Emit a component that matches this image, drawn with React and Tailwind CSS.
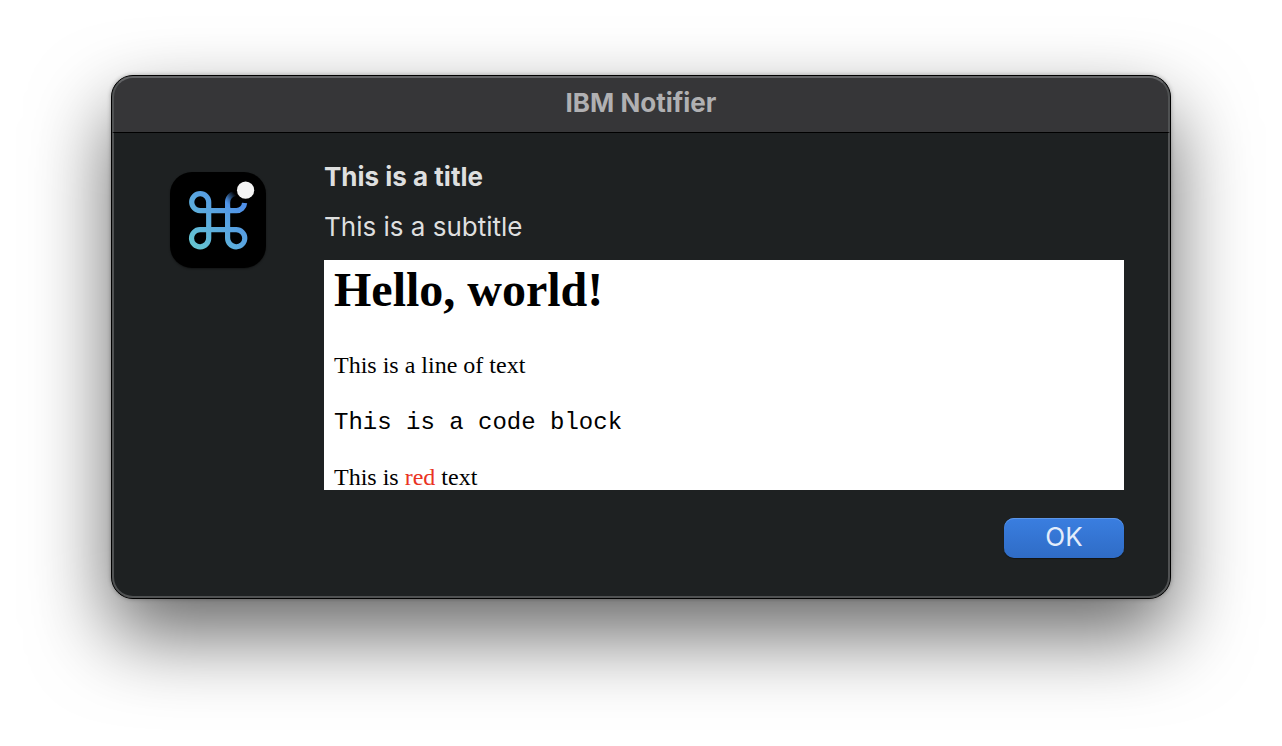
function AppIcon() {
  return (
    <svg
      viewBox="0 0 96 96"
      className="size-24 shrink-0 rounded-[22px] bg-black shadow-[0_1px_2px_rgba(0,0,0,0.4)]"
      role="img"
      aria-label="IBM Notifier"
    >
      <defs>
        <linearGradient id="stroke" gradientUnits="userSpaceOnUse" x1="20" y1="76" x2="76" y2="20">
          <stop offset="0" stopColor="#66c8d0" />
          <stop offset="0.5" stopColor="#5aa6e0" />
          <stop offset="1" stopColor="#4a86ea" />
        </linearGradient>
        <linearGradient id="fade" gradientUnits="userSpaceOnUse" x1="57" y1="31" x2="66" y2="23">
          <stop offset="0" stopColor="#4f94e8" />
          <stop offset="0.25" stopColor="#3f78bd" />
          <stop offset="1" stopColor="#000000" />
        </linearGradient>
      </defs>
      <path
        d="M57.6 36V30.2A8.8 8.8 0 0 1 66 21.4"
        fill="none"
        stroke="url(#fade)"
        strokeWidth="5.2"
      />
      <path
        d="M74.6 31A8.2 8.2 0 0 1 66.2 38.6H30A8.5 8.5 0 1 1 38.7 30V66A8.6 8.6 0 1 1 30 57.6H66A8.6 8.6 0 1 1 57.6 66V35"
        fill="none"
        stroke="url(#stroke)"
        strokeWidth="5.2"
      />
      <circle cx="75.6" cy="18.2" r="8.6" fill="#f4f4f4" />
    </svg>
  );
}

export default function App() {
  return (
    <main className="min-h-screen overflow-hidden bg-white px-[111px] pt-[75px] pb-36 font-[Inter,sans-serif]">
      <section
        role="dialog"
        aria-labelledby="window-title"
        className="rounded-[22px] border border-black bg-[#1e2122] shadow-[0_36px_80px_rgba(0,0,0,0.6),0_0_4px_rgba(0,0,0,0.3)]"
      >
        <header className="flex h-[57px] items-center justify-center rounded-t-[21px] border-x-2 border-t-2 border-b border-x-[#505253] border-t-[#646567] border-b-black bg-[#363638] pb-1">
          <h1 id="window-title" className="text-[26px] leading-8 font-bold text-[#b0b0b2]">
            IBM Notifier
          </h1>
        </header>
        <div className="flex gap-[58px] rounded-b-[21px] border-x-2 border-b-2 border-[#505253] pt-7 pr-11 pb-[38px] pl-14">
          <div className="pt-[11px]">
            <AppIcon />
          </div>
          <div className="flex min-w-0 flex-1 flex-col">
            <h2 className="text-[26px] leading-8 font-bold text-[#dedfdf]">This is a title</h2>
            <p className="mt-[18px] text-[26px] leading-8 text-[#dedfdf]">This is a subtitle</p>
            <article className="mt-[17px] h-[230px] overflow-hidden bg-white px-[10px] pt-[2px] font-['Liberation_Serif',serif] text-2xl leading-7 text-black">
              <h3 className="text-5xl leading-14 font-bold">Hello, world!</h3>
              <p className="mt-[33px]">This is a line of text</p>
              <pre className="mt-[30px] font-['Liberation_Mono',monospace] leading-7">This is a code block</pre>
              <p className="mt-[26px]">
                This is <span className="text-[#ea3323]">red</span> text
              </p>
            </article>
            <button
              type="button"
              className="mt-7 h-10 w-30 self-end rounded-[10px] bg-linear-to-b from-[#3a7ee0] to-[#2f6cc6] pb-0.5 text-[26px] leading-8 text-[#e3edfb] shadow-[inset_0_1px_0_#5c96e8,0_1px_1px_rgba(0,0,0,0.4)]"
            >
              OK
            </button>
          </div>
        </div>
      </section>
    </main>
  );
}
